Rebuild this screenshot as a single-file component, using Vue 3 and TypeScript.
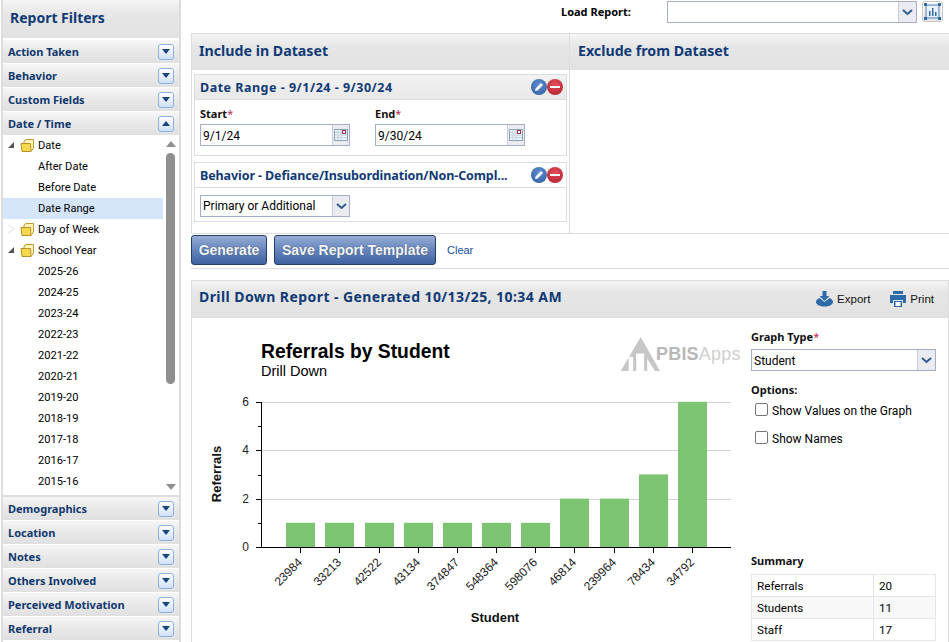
<script setup lang="ts">
const topGroups = ['Action Taken', 'Behavior', 'Custom Fields']
const bottomGroups = ['Demographics', 'Location', 'Notes', 'Others Involved', 'Perceived Motivation', 'Referral']
const years = ['2025-26', '2024-25', '2023-24', '2022-23', '2021-22', '2020-21', '2019-20', '2018-19', '2017-18', '2016-17', '2015-16']
const bars = [
  { x: 286, v: 1, l: '23984' }, { x: 325, v: 1, l: '33213' }, { x: 365, v: 1, l: '42522' },
  { x: 404, v: 1, l: '43134' }, { x: 443, v: 1, l: '374847' }, { x: 482, v: 1, l: '548364' },
  { x: 521, v: 1, l: '598076' }, { x: 560, v: 2, l: '46814' }, { x: 600, v: 2, l: '239964' },
  { x: 639, v: 3, l: '78434' }, { x: 678, v: 6, l: '34792' },
]
const ox = 191
const oy = 318
const summary = [['Referrals', '20'], ['Students', '11'], ['Staff', '17']]
</script>

<template>
  <div class="page">
    <aside class="side">
      <h2 class="side-title">Report Filters</h2>
      <div v-for="g in topGroups" :key="g" class="group">
        <span>{{ g }}</span><i class="tog"><b class="dn"></b></i>
      </div>
      <div class="group">
        <span>Date / Time</span><i class="tog"><b class="up"></b></i>
      </div>
      <div class="tree">
        <div class="tree-list">
          <div class="node"><b class="ar open"></b><svg class="folder" viewBox="0 0 15 15"><path d="M4 5V3l2-1.500h7.500V10L11 13.500" fill="#fff3b8" stroke="#c09a30"/><path d="M1 5.500h9.500l.5 8H2z" fill="#f5d84e" stroke="#b8902a"/></svg>Date</div>
          <div class="leaf">After Date</div>
          <div class="leaf">Before Date</div>
          <div class="leaf sel">Date Range</div>
          <div class="node"><b class="ar closed"></b><svg class="folder" viewBox="0 0 15 15"><path d="M4 5V3l2-1.500h7.500V10L11 13.500" fill="#fff3b8" stroke="#c09a30"/><path d="M1 5.500h9.500l.5 8H2z" fill="#f5d84e" stroke="#b8902a"/></svg>Day of Week</div>
          <div class="node"><b class="ar open"></b><svg class="folder" viewBox="0 0 15 15"><path d="M4 5V3l2-1.500h7.500V10L11 13.500" fill="#fff3b8" stroke="#c09a30"/><path d="M1 5.500h9.500l.5 8H2z" fill="#f5d84e" stroke="#b8902a"/></svg>School Year</div>
          <div v-for="y in years" :key="y" class="leaf">{{ y }}</div>
        </div>
        <div class="scroll">
          <b class="sc-up"></b>
          <div class="thumb"></div>
          <b class="sc-dn"></b>
        </div>
      </div>
      <div v-for="g in bottomGroups" :key="g" class="group">
        <span>{{ g }}</span><i class="tog"><b class="dn"></b></i>
      </div>
    </aside>

    <main class="main">
      <div class="loadbar">
        <label class="load-label">Load Report:</label>
        <div class="combo load-combo"><span class="combo-text"></span><span class="combo-btn"><svg width="11" height="7" viewBox="0 0 11 7"><path d="M1 1l4.500 4 4.500-4" fill="none" stroke="#2f5b8f" stroke-width="2"/></svg></span></div>
        <button class="chartbtn"><svg width="17" height="17" viewBox="0 0 17 17"><rect x="2" y="2" width="13" height="13" fill="#eaf2fb" stroke="#4a7db5"/><path d="M5 13V8h1.500v5zM8 13V5h1.500v8zM11 13V9h1.500v4z" fill="#2f6aa8"/><path d="M0 0h3v3H0zM14 0h3v3h-3zM0 14h3v3H0zM14 14h3v3h-3z" fill="#2f6aa8"/></svg></button>
      </div>

      <section class="dataset">
        <div class="ds-col ds-inc">
          <h3 class="ds-head">Include in Dataset</h3>
          <div class="card first">
            <div class="card-head">
              <span class="ht-date">Date Range - 9/1/24 - 9/30/24</span>
              <span class="acts">
                <i class="act edit"><svg width="12" height="12" viewBox="0 0 12 12"><path d="M2 10l.6-2.600L8 2l2 2-5.400 5.400z" fill="#fff"/></svg></i>
                <i class="act del"><b></b></i>
              </span>
            </div>
            <div class="dates">
              <div class="field">
                <label>Start<em>*</em></label>
                <div class="combo date"><span class="combo-text">9/1/24</span><span class="combo-btn"><svg width="14" height="14" viewBox="0 0 14 14"><rect x=".5" y="1.500" width="13" height="11" fill="#eef3f8" stroke="#8fa3b8"/><path d="M1 4.500h12M1 7h12M1 9.500h12M4 2v10M7 2v10" stroke="#c6d2de"/><rect x="8.500" y="2.500" width="3" height="3" fill="#fff" stroke="#a03050"/></svg></span></div>
              </div>
              <div class="field">
                <label>End<em>*</em></label>
                <div class="combo date"><span class="combo-text">9/30/24</span><span class="combo-btn"><svg width="14" height="14" viewBox="0 0 14 14"><rect x=".5" y="1.500" width="13" height="11" fill="#eef3f8" stroke="#8fa3b8"/><path d="M1 4.500h12M1 7h12M1 9.500h12M4 2v10M7 2v10" stroke="#c6d2de"/><rect x="8.500" y="2.500" width="3" height="3" fill="#fff" stroke="#a03050"/></svg></span></div>
              </div>
            </div>
          </div>
          <div class="card second">
            <div class="card-head plain">
              <span class="ht-beh">Behavior - Defiance/Insubordination/Non-Compl...</span>
              <span class="acts">
                <i class="act edit"><svg width="12" height="12" viewBox="0 0 12 12"><path d="M2 10l.6-2.600L8 2l2 2-5.400 5.400z" fill="#fff"/></svg></i>
                <i class="act del"><b></b></i>
              </span>
            </div>
            <div class="card-body">
              <div class="combo date"><span class="combo-text">Primary or Additional</span><span class="combo-btn"><svg width="11" height="7" viewBox="0 0 11 7"><path d="M1 1l4.500 4 4.500-4" fill="none" stroke="#2f5b8f" stroke-width="2"/></svg></span></div>
            </div>
          </div>
        </div>
        <div class="ds-col ds-exc">
          <h3 class="ds-head">Exclude from Dataset</h3>
        </div>
      </section>

      <div class="actions">
        <button class="btn gen">Generate</button>
        <button class="btn save">Save Report Template</button>
        <a class="clear">Clear</a>
      </div>

      <section class="report">
        <header class="rep-head">
          <h3>Drill Down Report - Generated 10/13/25, 10:34 AM</h3>
          <span class="rep-act export"><svg width="17" height="16" viewBox="0 0 17 16"><path d="M6.500 0h4v5h3L8.500 10l-5-5h3z" fill="#2f6aa8"/><path d="M0 11c0-2 2-3.500 3.500-4L8.500 11l5-4c1.500.5 3.500 2 3.500 4 0 2.500-3.500 4.500-8.500 4.500S0 13.500 0 11z" fill="#2f6aa8"/></svg>Export</span>
          <span class="rep-act print"><svg width="16" height="16" viewBox="0 0 16 16"><path d="M3 0h10v3H3z" fill="#2f6aa8"/><path d="M0 4h16v8h-3V9H3v3H0z" fill="#2f6aa8"/><path d="M4 10h8v6H4z" fill="#2f6aa8"/><path d="M5.500 11h5v4h-5z" fill="#fff"/></svg>Print</span>
        </header>
        <div class="rep-body">
          <svg class="chart" width="555" height="324" viewBox="0 0 555 324">
            <g :transform="`translate(${-ox} ${-oy})`">
              <text x="261" y="358" class="t1">Referrals by Student</text>
              <text x="261" y="376" class="t2">Drill Down</text>
              <path d="M640.700 337L620.700 371h8V357h4.500v14h3V353.500h8V371h3V358.500L655 371h5z" fill="#c6c6c6"/>
              <text x="656" y="360" class="logo"><tspan class="logo-a">PBIS</tspan><tspan class="logo-b">Apps</tspan></text>
              <path d="M261 402.500H731M261 450.500H731M261 499.500H731" stroke="#d0d0d0" fill="none"/>
              <rect v-for="b in bars" :key="b.x" :x="b.x" :y="547 - b.v * 24.200" width="29" :height="b.v * 24.200" fill="#7cc471"/>
              <path d="M261.500 402V548M256 402.500h5M258 426.500h3M256 450.500h5M258 475.500h3M256 499.500h5M258 523.500h3M256 547.500H731" stroke="#000" fill="none"/>
              <g v-for="b in bars" :key="'t' + b.x">
                <path :d="`M${b.x + 14.500} 547v6`" stroke="#000"/>
                <text class="tick" text-anchor="end" :transform="`translate(${b.x + 17} 563) rotate(-45)`">{{ b.l }}</text>
              </g>
              <text x="249" y="406" class="tick" text-anchor="end">6</text>
              <text x="249" y="454" class="tick" text-anchor="end">4</text>
              <text x="249" y="503" class="tick" text-anchor="end">2</text>
              <text x="249" y="551" class="tick" text-anchor="end">0</text>
              <text class="axis" text-anchor="middle" transform="translate(221 474) rotate(-90)">Referrals</text>
              <text class="axis" x="495" y="622" text-anchor="middle">Student</text>
            </g>
          </svg>
          <div class="opts">
            <label class="opt-l">Graph Type<em>*</em></label>
            <div class="combo gtype"><span class="combo-text">Student</span><span class="combo-btn"><svg width="11" height="7" viewBox="0 0 11 7"><path d="M1 1l4.500 4 4.500-4" fill="none" stroke="#2f5b8f" stroke-width="2"/></svg></span></div>
            <label class="opt-l options">Options:</label>
            <div class="check c1"><i class="box"></i>Show Values on the Graph</div>
            <div class="check c2"><i class="box"></i>Show Names</div>
            <label class="opt-l summary">Summary</label>
            <table class="sum">
              <tbody>
                <tr v-for="r in summary" :key="r[0]"><td class="k">{{ r[0] }}</td><td class="v">{{ r[1] }}</td></tr>
              </tbody>
            </table>
          </div>
        </div>
      </section>
    </main>
  </div>
</template>

<style>
html, body { margin: 0; background: #fff; overflow: hidden; }
</style>

<style scoped>
.page { width: 949px; height: 642px; display: flex; overflow: hidden; font-family: Roboto, "Noto Sans", sans-serif; font-size: 12px; color: #000; background: #fff; }
h2, h3 { margin: 0; }
i, em { font-style: normal; }

.side { width: 176px; height: 642px; flex: none; margin-left: 1px; margin-right: 10px; border-left: 2px solid #ddd; border-right: 2px solid #ddd; background: #fff; }
.side-title { height: 38px; box-sizing: border-box; padding: 8px 0 0 7px; font: bold 14px/20px "Noto Sans", sans-serif; color: #0f3a75; background: linear-gradient(#f4f4f4, #e6e6e6 40%, #e2e2e2); margin-bottom: 2px; }
.group { height: 23px; margin-bottom: 1px; display: flex; align-items: center; justify-content: space-between; padding: 0 5px; background: linear-gradient(#f6f6f6, #e8e8e8 50%, #e0e0e0); font: 700 11px "Noto Sans", sans-serif; color: #10386e; }
.tog { width: 14px; height: 14px; border: 1px solid #8db1e0; border-radius: 3px; background: linear-gradient(#fff, #cfe0f7); display: flex; align-items: center; justify-content: center; }
.dn { border-left: 4px solid transparent; border-right: 4px solid transparent; border-top: 5px solid #17457e; }
.up { border-left: 4px solid transparent; border-right: 4px solid transparent; border-bottom: 5px solid #17457e; }

.tree { height: 362px; display: flex; margin-top: -1px; border-bottom: 2px solid #ddd; box-sizing: border-box; }
.tree-list { width: 160px; font-size: 11.100px; }
.node { height: 21px; display: flex; align-items: center; padding-left: 5px; padding-bottom: 1px; box-sizing: border-box; }
.leaf { height: 21px; line-height: 22px; padding-left: 35px; }
.leaf.sel { background: #d5e6fa; }
.ar { width: 0; height: 0; flex: none; }
.ar.open { border-left: 6px solid transparent; border-bottom: 6px solid #555; }
.ar.closed { border-left: 6px solid #fff; border-top: 4px solid transparent; border-bottom: 4px solid transparent; filter: drop-shadow(0 0 .6px #777); }
.folder { width: 15px; height: 15px; margin-left: 6px; margin-right: 3px; flex: none; }
.scroll { width: 15px; display: flex; flex-direction: column; align-items: center; background: #fff; }
.thumb { width: 9px; height: 231px; background: #8f8f8f; border-radius: 5px; margin-top: 6px; }
.sc-up { border-left: 5px solid transparent; border-right: 5px solid transparent; border-bottom: 6px solid #8f8f8f; margin-top: 6px; }
.sc-dn { border-left: 5px solid transparent; border-right: 5px solid transparent; border-top: 6px solid #8f8f8f; margin-top: auto; margin-bottom: 5px; }

.main { width: 758px; flex: none; }
.loadbar { height: 33px; display: flex; align-items: flex-start; box-sizing: border-box; padding-top: 1px; }
.load-label { margin-left: 370px; width: 106px; font: 700 11px/21px "Noto Sans", sans-serif; }
.combo { display: flex; border: 1px solid #a6adc6; box-sizing: border-box; background: #fff; height: 22px; }
.combo-text { flex: 1; padding-left: 2px; line-height: 20px; white-space: nowrap; overflow: hidden; }
.field .combo-text, .gtype .combo-text { line-height: 22px; }
.combo-btn { width: 17px; flex: none; background: #e9ebf0; border-left: 1px solid #c6cbd8; display: flex; align-items: center; justify-content: center; }
.load-combo { width: 250px; }
.chartbtn { width: 21px; height: 21px; margin-left: 5px; padding: 0; border: 1px solid #c8c8c8; border-radius: 3px; background: linear-gradient(#fff, #e6e6e6); display: flex; align-items: center; justify-content: center; }

.dataset { height: 201px; display: flex; border-top: 1px solid #ddd; border-bottom: 1px solid #ddd; box-sizing: border-box; margin-bottom: 1px; }
.ds-col { box-sizing: border-box; }
.ds-inc { width: 379px; border-left: 1px solid #ddd; border-right: 1px solid #ddd; }
.ds-exc { flex: 1; }
.ds-head { height: 36px; box-sizing: border-box; padding: 7px 0 0 7px; font: bold 14.200px/20px "Noto Sans", sans-serif; color: #0f3a75; background: linear-gradient(#f5f5f5, #e6e6e6 35%, #e2e2e2); }
.ds-exc .ds-head { padding-left: 8px; }
.card { margin: 0 2px; border: 1px solid #ddd; box-sizing: border-box; }
.card.first { margin-top: 4px; height: 82px; }
.card.second { margin-top: 6px; height: 60px; }
.card-head { height: 24px; display: flex; align-items: center; justify-content: space-between; padding: 0 3px 0 5px; background: linear-gradient(#f2f2f2, #e8e8e8); border-bottom: 1px solid #ddd; font: 700 12.500px "Noto Sans", sans-serif; color: #0f3a75; white-space: nowrap; }
.ht-date { letter-spacing: .5px; }
.ht-beh { letter-spacing: -.1px; }
.card-head.plain { background: #fff; }
.acts { display: flex; }
.act { width: 16px; height: 16px; border-radius: 50%; display: flex; align-items: center; justify-content: center; }
.act.edit { background: radial-gradient(circle at 50% 35%, #5f8fd0, #2c5a9e); }
.act.del { background: radial-gradient(circle at 50% 35%, #e0505a, #b01c2a); }
.act.del b { width: 10px; height: 2px; background: #fff; }
.dates { display: flex; padding: 4px 0 0 5px; }
.field { width: 175px; }
.field label { display: block; font: 700 11px/20px "Noto Sans", sans-serif; height: 20px; color: #111; }
em { color: #c0264a; font-weight: 400; }
.date { width: 150px; }
.date .combo-btn { width: 16px; }
.card-body { padding: 7px 5px; }

.actions { height: 34px; display: flex; align-items: center; border-bottom: 1px solid #ddd; box-sizing: border-box; padding: 0 0 3px; margin-bottom: 11px; }
.btn { height: 30px; border: 1px solid #24406e; border-radius: 3px; color: #f4f6fc; font: bold 14px "Liberation Sans", sans-serif; background: linear-gradient(#97aed6, #6584bb 50%, #3f629f); padding: 0; text-shadow: 0 0 1px #345; }
.gen { width: 76px; }
.save { width: 162px; margin-left: 7px; }
.clear { margin-left: 11px; color: #0f4ea0; font: 11px "Liberation Sans", sans-serif; }

.report { border: 1px solid #ddd; border-bottom: 0; box-sizing: border-box; width: 758px; }
.rep-head { height: 37px; display: flex; align-items: center; background: linear-gradient(#f5f5f5, #e6e6e6 30%, #e2e2e2); border-bottom: 1px solid #ddd; padding: 0 14px 0 7px; box-sizing: border-box; }
.rep-head h3 { flex: 1; font: bold 14px/20px "Noto Sans", sans-serif; color: #0f3a75; letter-spacing: .43px; margin-top: -5px; }
.rep-act { display: flex; align-items: center; font: 11.500px "Liberation Sans", sans-serif; color: #111; }
.rep-act svg { margin-right: 4px; }
.print { margin-left: 20px; }
.rep-body { display: flex; }
.chart { flex: none; margin-left: -1px; }
.t1 { font: bold 19.300px "Liberation Sans", sans-serif; }
.t2 { font: 14.500px "Liberation Sans", sans-serif; }
.logo { font: 18px "Liberation Sans", sans-serif; letter-spacing: .2px; }
.logo-a { font-weight: 700; fill: #b8b8b8; }
.logo-b { fill: #cfcfcf; }
.tick { font: 12px "Liberation Sans", sans-serif; fill: #222; }
.axis { font: bold 13px "Liberation Sans", sans-serif; fill: #111; }
.opts { margin-left: 5px; width: 186px; padding-top: 11px; }
.opt-l { display: block; font: 700 11px/16px "Noto Sans", sans-serif; color: #111; }
.gtype { width: 185px; height: 22px; margin-top: 4px; }
.options { margin-top: 11px; }
.check { display: flex; align-items: center; margin-left: 5px; height: 16px; padding-top: 2px; box-sizing: content-box; }
.c1 { margin-top: 3px; }
.c2 { margin-top: 10px; }
.box { width: 13px; height: 13px; border: 1px solid #767676; border-radius: 2px; box-sizing: border-box; margin: -3px 4px 0 -1px; background: #fff; }
.summary { margin-top: 106px; }
.sum { width: 185px; margin-top: 5px; border-collapse: collapse; border: 1px solid #e0e0e0; font-size: 11.700px; }
.sum td { border: 1px solid #e6e6e6; height: 22px; padding: 0 5px; box-sizing: border-box; }
.sum .k { width: 122px; }
.sum tr:nth-child(even) { background: #f8f8f8; }
</style>
